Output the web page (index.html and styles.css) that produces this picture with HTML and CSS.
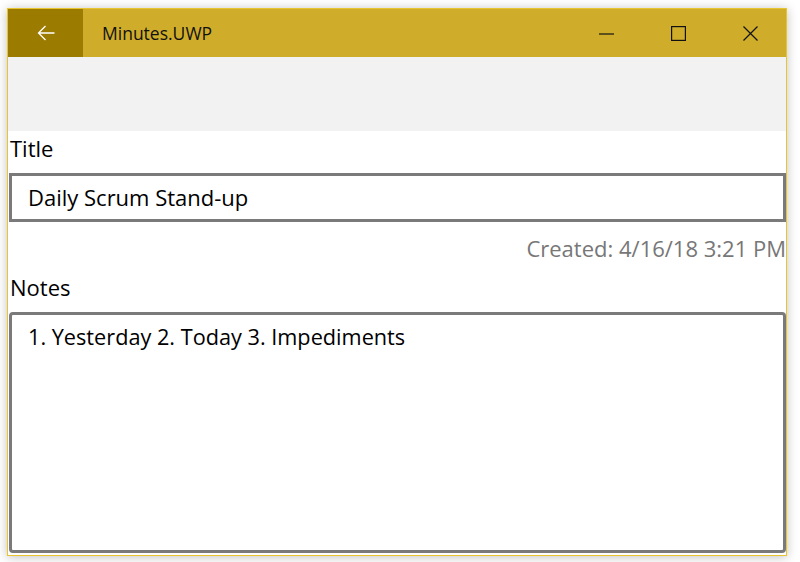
FILE: index.html
```html
<!DOCTYPE html>
<html>
<head>
<meta charset="utf-8">
<link rel="stylesheet" href="styles.css">
</head>
<body>
<div class="window">
  <div class="titlebar">
    <div class="back">
      <svg width="18" height="16" viewBox="0 0 18 16"><path d="M17.5 8H1.5M8.5 1L1.5 8L8.5 15" fill="none" stroke="#fff" stroke-width="1.3"/></svg>
    </div>
    <div class="apptitle">Minutes.UWP</div>
    <div class="caption">
      <div class="cbtn"><svg width="15" height="15" viewBox="0 0 15 15"><path d="M0 8H15" stroke="#111" stroke-width="1.2"/></svg></div>
      <div class="cbtn"><svg width="15" height="15" viewBox="0 0 15 15"><rect x="0.6" y="0.6" width="13.8" height="13.8" fill="none" stroke="#111" stroke-width="1.2"/></svg></div>
      <div class="cbtn"><svg width="15" height="15" viewBox="0 0 15 15"><path d="M0.5 0.5L14.5 14.5M14.5 0.5L0.5 14.5" stroke="#111" stroke-width="1.2"/></svg></div>
    </div>
  </div>
  <div class="toolbar"></div>
  <div class="content">
    <div class="label">Title</div>
    <div class="textbox">Daily Scrum Stand-up</div>
    <div class="created">Created: 4/16/18 3:21 PM</div>
    <div class="label notes-label">Notes</div>
    <div class="notes">1. Yesterday 2. Today 3. Impediments</div>
  </div>
</div>
</body>
</html>
```
FILE: styles.css
```css
html, body {
  margin: 0;
  padding: 0;
  background: #ffffff;
}
body {
  width: 800px;
  height: 562px;
  overflow: hidden;
  font-family: "Open Sans", "Noto Sans", sans-serif;
  color: #000;
}
.window {
  margin: 8px 0 0 7px;
  width: 780px;
  height: 548px;
  box-sizing: border-box;
  border: 1px solid #e8c52e;
  background: #fff;
  box-shadow: 0 1px 10px rgba(0,0,0,0.25);
  display: flex;
  flex-direction: column;
}
.titlebar {
  height: 48px;
  background: #cfad2b;
  display: flex;
  align-items: center;
  flex: none;
}
.back {
  width: 75px;
  height: 48px;
  background: #9b7b00;
  display: flex;
  align-items: center;
  justify-content: center;
}
.apptitle {
  margin-left: 19px;
  font-size: 17.5px;
  flex: 1;
  color: #111;
}
.caption {
  display: flex;
}
.cbtn {
  width: 72px;
  height: 48px;
  display: flex;
  align-items: center;
  justify-content: center;
}
.toolbar {
  height: 74px;
  background: #f2f2f2;
  flex: none;
}
.content {
  flex: 1;
  display: flex;
  flex-direction: column;
  padding: 0 0 2px 1px;
}
.label {
  font-size: 22px;
  height: 42px;
  line-height: 34px;
  padding-left: 1px;
}
.textbox {
  height: 49px;
  box-sizing: border-box;
  border: 3px solid #7a7a7a;
  font-size: 22px;
  line-height: 42px;
  padding-left: 16px;
}
.created {
  height: 48px;
  font-size: 22px;
  line-height: 52px;
  text-align: right;
  color: #777;
}
.notes-label {
  height: 42px;
}
.notes {
  flex: 1;
  box-sizing: border-box;
  border: 3px solid #7a7a7a;
  border-radius: 4px;
  font-size: 21.7px;
  line-height: 40px;
  padding: 2px 16px;
}
```
